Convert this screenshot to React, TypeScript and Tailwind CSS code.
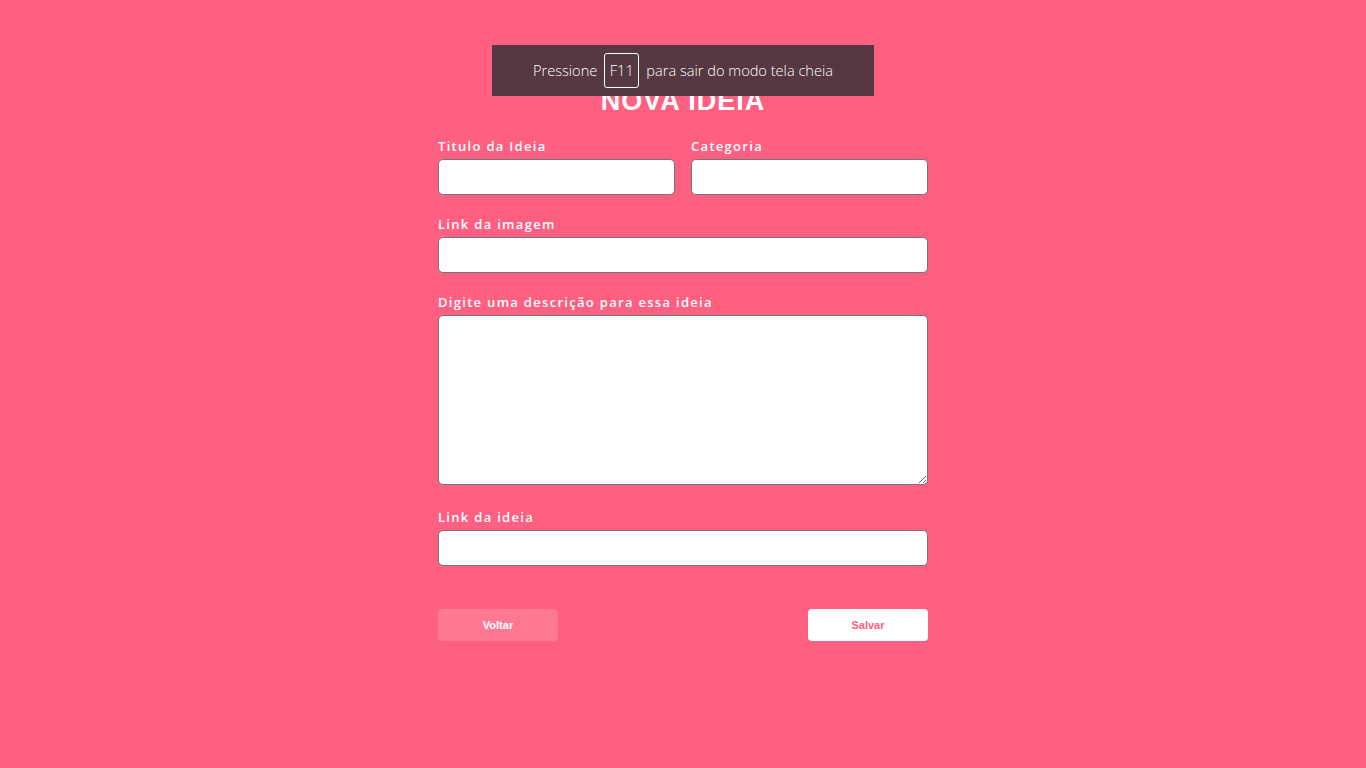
import React from 'react';

const labelCls =
  "block h-4 leading-4 text-[13px] font-semibold tracking-[0.1em] text-white mb-[5px] font-['Open_Sans',sans-serif]";
const inputCls =
  'block w-full h-9 rounded-[5px] border border-[#767676] bg-white px-2 text-sm outline-none';

export default function App() {
  return (
    <div className="relative min-h-[768px] w-full bg-[#ff5f81]">
      {/* Fullscreen hint overlay */}
      <div className="absolute left-[492px] top-[45px] flex h-[51px] w-[382px] items-center justify-center gap-[7px] bg-[#553842] font-['Open_Sans',sans-serif] text-[14.6px] font-light text-white">
        <span>Pressione</span>
        <span className="flex h-[35px] w-[35px] items-center justify-center rounded-[3px] border border-white">F11</span>
        <span>para sair do modo tela cheia</span>
      </div>

      <div className="flex flex-col items-center pt-[85px]">
        <h1 className="h-8 text-[27px] font-bold leading-8 tracking-[1px] text-white font-['Liberation_Sans',Arial,sans-serif]">
          NOVA IDEIA
        </h1>

        <form className="mt-[21px] flex w-[490px] flex-col" onSubmit={(e) => e.preventDefault()}>
          <div className="grid grid-cols-2 gap-4">
            <div>
              <label className={labelCls}>Titulo da Ideia</label>
              <input className={inputCls} />
            </div>
            <div>
              <label className={labelCls}>Categoria</label>
              <input className={inputCls} />
            </div>
          </div>

          <div className="mt-[21px]">
            <label className={labelCls}>Link da imagem</label>
            <input className={inputCls} />
          </div>

          <div className="mt-[21px]">
            <label className={labelCls}>Digite uma descrição para essa ideia</label>
            <textarea className="block h-[170px] w-full rounded-[5px] border border-[#767676] bg-white p-2 text-sm outline-none" />
          </div>

          <div className="mt-6">
            <label className={labelCls}>Link da ideia</label>
            <input className={inputCls} />
          </div>

          <div className="mt-[43px] flex justify-between font-['Liberation_Sans',Arial,sans-serif]">
            <button type="button" className="h-8 w-[120px] rounded-[4px] bg-[#ff7893] text-[11px] font-bold text-white">
              Voltar
            </button>
            <button type="submit" className="h-8 w-[120px] rounded-[4px] bg-white text-[11px] font-bold text-[#ff5f81]">
              Salvar
            </button>
          </div>
        </form>
      </div>
    </div>
  );
}
